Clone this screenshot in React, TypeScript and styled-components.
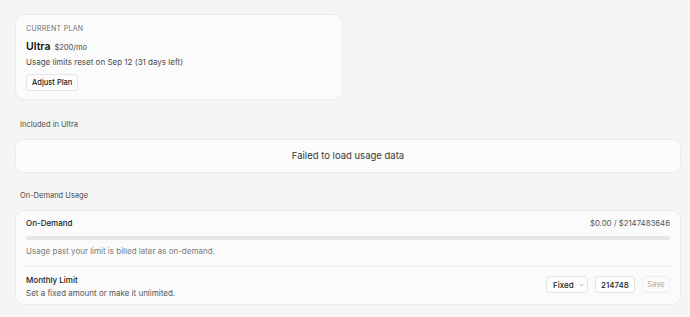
import React from "react";
import styled, { createGlobalStyle } from "styled-components";

const Global = createGlobalStyle`
  html, body { margin: 0; padding: 0; background: #f5f5f5; }
  body { font-family: Inter, "Noto Sans", sans-serif; color: #1f1f1f; -webkit-font-smoothing: antialiased; }
  * { box-sizing: border-box; }
`;

const Page = styled.div`
  display: flex;
  flex-direction: column;
  padding: 14px 9px 0 15px;
  width: 690px;
  height: 317px;
  overflow: hidden;
`;

const Card = styled.div<{ $width?: string }>`
  background: #fbfbfb;
  border: 1px solid #ececec;
  border-radius: 9px;
  width: ${(p) => p.$width ?? "100%"};
  flex-shrink: 0;
`;

const PlanCard = styled(Card)`
  padding: 9px 10px 8px 10px;
  height: 86px;
  display: flex;
  flex-direction: column;
  align-items: flex-start;
`;

const Eyebrow = styled.div`
  font-size: 7px;
  letter-spacing: 0.3px;
  color: #707070;
  text-transform: uppercase;
  line-height: 10px;
`;

const PlanRow = styled.div`
  display: flex;
  align-items: baseline;
  gap: 4px;
  margin-top: 6px;
  line-height: 13px;
`;

const PlanName = styled.span`
  font-size: 10.5px;
  font-weight: 600;
  color: #111;
`;

const Price = styled.span`
  font-size: 7.5px;
  color: #444;
`;

const Muted = styled.div<{ $size?: number }>`
  font-size: ${(p) => p.$size ?? 8}px;
  color: #555;
  line-height: 12px;
`;

const Reset = styled(Muted)`
  margin-top: 2px;
  color: #4a4a4a;
`;

const Button = styled.button`
  margin-top: 6px;
  height: 18px;
  padding: 0 5px;
  font-family: inherit;
  font-size: 7.5px;
  font-weight: 500;
  color: #1a1a1a;
  background: #fdfdfd;
  border: 1px solid #e6e6e6;
  border-radius: 4px;
`;

const SectionLabel = styled.div<{ $top: number }>`
  font-size: 7.5px;
  color: #4a4a4a;
  margin: ${(p) => p.$top}px 0 0 5px;
  line-height: 10px;
`;

const EmptyCard = styled(Card)`
  margin-top: 9px;
  height: 34px;
  display: flex;
  align-items: center;
  justify-content: center;
  font-size: 9.5px;
  color: #383838;
`;

const UsageCard = styled(Card)`
  margin-top: 9px;
  padding: 6px 10px 0 10px;
  height: 95px;
`;

const Row = styled.div`
  display: flex;
  justify-content: space-between;
  align-items: center;
`;

const Title = styled.div<{ $lh?: number }>`
  font-size: 8px;
  font-weight: 500;
  color: #1a1a1a;
  line-height: ${(p) => p.$lh ?? 12}px;
`;

const Amount = styled.div`
  font-size: 7.8px;
  color: #555;
  line-height: 12px;
`;

const Bar = styled.div`
  height: 4px;
  border-radius: 2px;
  background: #e6e6e6;
  margin-top: 7px;
`;

const Hint = styled(Muted)`
  margin-top: 5px;
  color: #7a7a7a;
`;

const Divider = styled.div`
  height: 1px;
  background: #ececec;
  margin-top: 9px;
`;

const LimitRow = styled.div`
  display: flex;
  justify-content: space-between;
  align-items: flex-start;
  margin-top: 6.5px;
`;

const LimitText = styled(Muted)`
  line-height: 13px;
`;

const Controls = styled.div`
  display: flex;
  align-items: center;
  gap: 7px;
  margin-top: 2.5px;
`;

const Select = styled.div`
  display: flex;
  align-items: center;
  gap: 5px;
  height: 17px;
  width: 42px;
  padding: 0 0 0 6px;
  font-size: 8px;
  font-weight: 500;
  color: #1a1a1a;
  background: #fdfdfd;
  border: 1px solid #e6e6e6;
  border-radius: 4px;
`;

const Input = styled.div`
  display: flex;
  align-items: center;
  height: 17px;
  width: 40px;
  padding: 0 5px;
  font-size: 8px;
  font-weight: 500;
  color: #1a1a1a;
  background: #fff;
  border: 1px solid #e3e3e3;
  border-radius: 3px;
`;

const Save = styled.div`
  display: flex;
  align-items: center;
  justify-content: center;
  height: 17px;
  width: 28px;
  font-size: 7.5px;
  color: #a8a8a8;
  border: 1px solid #efefef;
  border-radius: 4px;
`;

export default function App() {
  return (
    <>
      <Global />
      <Page>
        <PlanCard $width="328px">
          <Eyebrow>Current Plan</Eyebrow>
          <PlanRow>
            <PlanName>Ultra</PlanName>
            <Price>$200/mo</Price>
          </PlanRow>
          <Reset>Usage limits reset on Sep 12 (31 days left)</Reset>
          <Button>Adjust Plan</Button>
        </PlanCard>

        <SectionLabel $top={19.5}>Included in Ultra</SectionLabel>
        <EmptyCard>Failed to load usage data</EmptyCard>

        <SectionLabel $top={18.5}>On-Demand Usage</SectionLabel>
        <UsageCard>
          <Row>
            <Title>On-Demand</Title>
            <Amount>$0.00 / $2147483646</Amount>
          </Row>
          <Bar />
          <Hint>Usage past your limit is billed later as on-demand.</Hint>
          <Divider />
          <LimitRow>
            <div>
              <Title $lh={13}>Monthly Limit</Title>
              <LimitText>Set a fixed amount or make it unlimited.</LimitText>
            </div>
            <Controls>
              <Select>
                Fixed
                <svg width="5" height="4" viewBox="0 0 5 4" fill="none">
                  <path d="M0.7 1 L2.5 2.8 L4.3 1" stroke="#9a9a9a" strokeWidth="0.7" />
                </svg>
              </Select>
              <Input>214748</Input>
              <Save>Save</Save>
            </Controls>
          </LimitRow>
        </UsageCard>
      </Page>
    </>
  );
}
